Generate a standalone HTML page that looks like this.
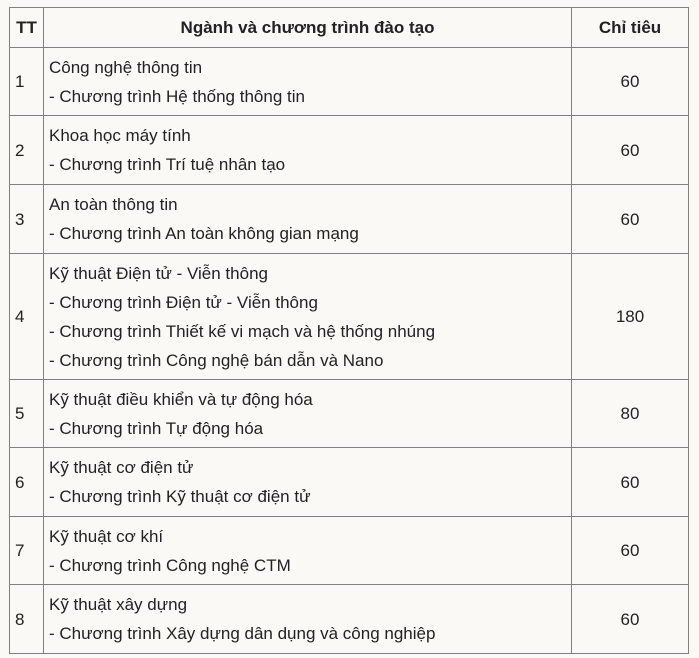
<!DOCTYPE html>
<html><head><meta charset="utf-8"><style>
html,body{margin:0;padding:0;background:#faf9f6;width:699px;height:658px;overflow:hidden}
table{position:absolute;left:9px;top:7px;border-collapse:collapse;font-family:"Liberation Sans",Arial,sans-serif;font-size:17px;color:#222;width:679px;table-layout:fixed}
td,th{border:1px solid #808080;padding:0 5px;line-height:29px;vertical-align:middle;text-align:left}
th{font-weight:bold;text-align:center}
td.c{text-align:center}
</style></head><body>
<table>
<colgroup><col style="width:34px"><col style="width:528px"><col style="width:117px"></colgroup>
<tr style="height:40px"><th>TT</th><th>Ngành và chương trình đào tạo</th><th>Chỉ tiêu</th></tr>
<tr style="height:68px"><td>1</td><td>Công nghệ thông tin<br>- Chương trình Hệ thống thông tin</td><td class="c">60</td></tr>
<tr style="height:69px"><td>2</td><td>Khoa học máy tính<br>- Chương trình Trí tuệ nhân tạo</td><td class="c">60</td></tr>
<tr style="height:69px"><td>3</td><td>An toàn thông tin<br>- Chương trình An toàn không gian mạng</td><td class="c">60</td></tr>
<tr style="height:126px"><td>4</td><td>Kỹ thuật Điện tử - Viễn thông<br>- Chương trình Điện tử - Viễn thông<br>- Chương trình Thiết kế vi mạch và hệ thống nhúng<br>- Chương trình Công nghệ bán dẫn và Nano</td><td class="c">180</td></tr>
<tr style="height:68px"><td>5</td><td>Kỹ thuật điều khiển và tự động hóa<br>- Chương trình Tự động hóa</td><td class="c">80</td></tr>
<tr style="height:69px"><td>6</td><td>Kỹ thuật cơ điện tử<br>- Chương trình Kỹ thuật cơ điện tử</td><td class="c">60</td></tr>
<tr style="height:68px"><td>7</td><td>Kỹ thuật cơ khí<br>- Chương trình Công nghệ CTM</td><td class="c">60</td></tr>
<tr style="height:69px"><td>8</td><td>Kỹ thuật xây dựng<br>- Chương trình Xây dựng dân dụng và công nghiệp</td><td class="c">60</td></tr>
</table>
</body></html>
